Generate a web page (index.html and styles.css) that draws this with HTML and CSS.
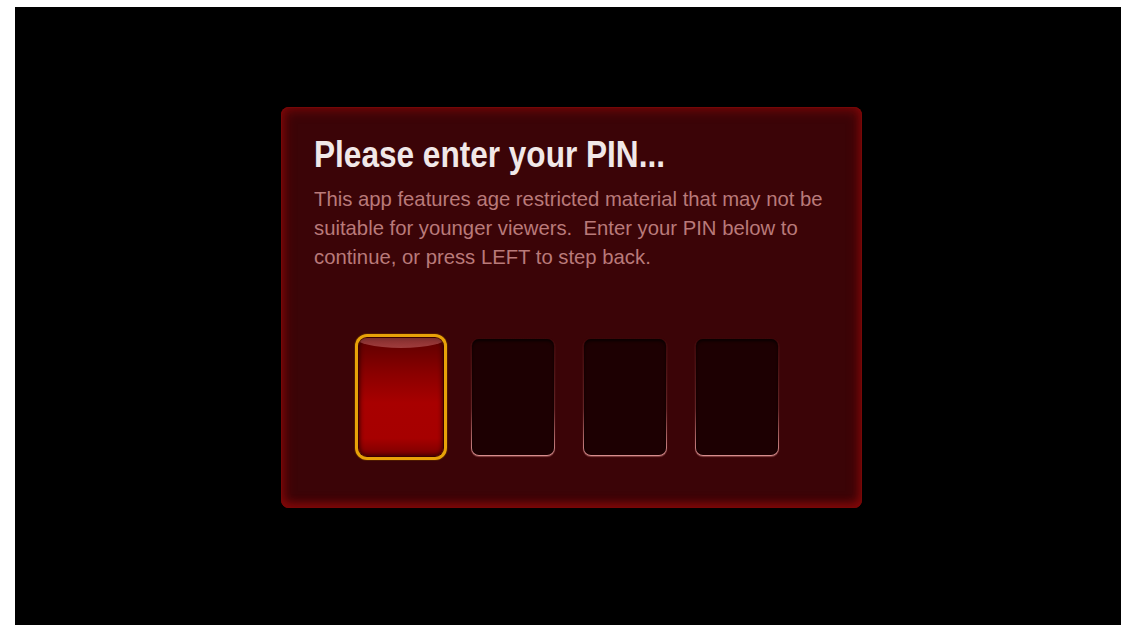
FILE: index.html
```html
<!DOCTYPE html>
<html lang="en">
<head>
<meta charset="utf-8">
<title>Enter PIN</title>
<link rel="stylesheet" href="styles.css">
</head>
<body>
<main class="stage">
  <section class="pin-dialog">
    <h1 class="pin-title">Please enter your PIN...</h1>
    <p class="pin-text">This app features age restricted material that may not be suitable for younger viewers.&nbsp; Enter your PIN below to continue, or press LEFT to step back.</p>
    <div class="pin-row">
      <div class="pin-box pin-box--active"></div>
      <div class="pin-box"></div>
      <div class="pin-box"></div>
      <div class="pin-box"></div>
    </div>
  </section>
</main>
</body>
</html>
```

FILE: styles.css
```css
html, body {
  margin: 0;
  height: 100%;
  background: #fff;
}

body {
  padding: 7px 3px 0 15px;
  box-sizing: border-box;
  overflow: hidden;
}

.stage {
  background: #000;
  height: 640px;
  padding: 100px 0 0 266px;
  box-sizing: border-box;
}

.pin-dialog {
  width: 581px;
  height: 401px;
  box-sizing: border-box;
  padding: 28px 0 0 33px;
  border-radius: 8px;
  background: #3b0407;
  box-shadow:
    inset 0 0 0 1px rgba(120, 8, 8, 0.9),
    inset 0 0 12px 3px rgba(140, 8, 8, 0.75),
    inset 0 -4px 8px rgba(170, 10, 10, 0.45);
  font-family: "Liberation Sans", Arial, sans-serif;
}

/* condensed face: narrow the wide sans horizontally */
.pin-title {
  margin: 0;
  font-size: 36px;
  line-height: 40px;
  font-weight: bold;
  color: #f1e8e8;
  transform: scaleX(0.877);
  transform-origin: left top;
  white-space: nowrap;
}

.pin-text {
  margin: 9px 0 0;
  width: 540px;
  font-size: 21px;
  line-height: 29px;
  color: #b97a7a;
  transform: scaleX(0.966);
  transform-origin: left top;
}

.pin-row {
  display: flex;
  gap: 28px;
  margin-top: 67px;
  padding-left: 45px;
}

.pin-box {
  position: relative;
  width: 84px;
  height: 118px;
  flex: none;
  box-sizing: border-box;
  border-radius: 8px;
  border: 1px solid transparent;
  background:
    linear-gradient(#1d0002, #1d0002) padding-box,
    linear-gradient(to bottom, rgba(60, 10, 10, 0.4) 0%, rgba(140, 70, 70, 0.5) 60%, rgba(225, 150, 150, 0.95) 100%) border-box;
  box-shadow:
    0 1px 1px rgba(200, 120, 120, 0.5),
    inset 0 2px 3px rgba(0, 0, 0, 0.7);
}

.pin-box--active {
  border: 0;
  background: linear-gradient(to bottom, #5e0000 0%, #8a0000 30%, #a80000 55%, #a60000 85%, #7a0000 100%);
  box-shadow:
    0 0 0 1px #3a0000,
    0 0 0 4px #e8a208,
    0 0 0 5px rgba(90, 40, 0, 0.6),
    inset 0 0 4px 1px rgba(40, 0, 0, 0.8);
  overflow: hidden;
}

/* glossy sheen across the top of the focused box */
.pin-box--active::before {
  content: "";
  position: absolute;
  left: -6px;
  right: -6px;
  top: -14px;
  height: 24px;
  border-radius: 50%;
  background: linear-gradient(to bottom, rgba(210, 120, 120, 0.2), rgba(200, 110, 110, 0.55));
}
```
